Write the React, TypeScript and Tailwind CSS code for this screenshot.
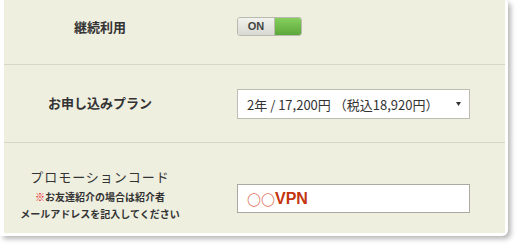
import React from 'react';

const jp = "font-['Meiryo','Noto_Sans_CJK_JP',sans-serif]";

const App: React.FC = () => {
  return (
    <div className={`w-[516px] h-[246px] bg-white ${jp} text-[#333]`}>
      <div className="w-[508px] h-[236px] bg-white rounded-br-[6px] rounded-tr-[4px] shadow-[3px_3px_5px_rgba(0,0,0,0.28)] pl-1 pr-[3px] pb-[3px]">
        <div className="h-full bg-[#efefe0] flex flex-col">
          {/* 継続利用 */}
          <div className="h-[65px] border-b border-[#d7d7c7] flex items-start pt-[17px]">
            <div className="w-[192px] h-[19px] flex items-center justify-center text-[13px] font-bold leading-none">
              継続利用
            </div>
            <div className="ml-[41px] flex h-[19px] w-[65px] rounded-[3px] border border-[#b9b9b0] overflow-hidden">
              <div className="w-[36px] flex items-center justify-center bg-gradient-to-b from-[#f2f2ee] to-[#d9d9d3] text-[11px] font-bold text-[#444] font-['Liberation_Sans',sans-serif] leading-none">
                ON
              </div>
              <div className="flex-1 border-l border-[#b9b9b0] bg-gradient-to-b from-[#86cf5e] to-[#5ca83a]" />
            </div>
          </div>

          {/* お申し込みプラン */}
          <div className="h-[78px] border-b border-[#d7d7c7] flex items-start pt-[24px]">
            <div className="w-[192px] pt-[4px] flex justify-center text-[13px] font-bold leading-[20px]">
              お申し込みプラン
            </div>
            <div className="ml-[41px] w-[233px] h-[30px] bg-white border border-[#bdbdb5] flex items-center pl-[9px] pr-[7px] text-[13px] leading-none">
              <span className="flex-1 whitespace-nowrap">2年 / 17,200円 （税込18,920円）</span>
              <svg width="5" height="4" viewBox="0 0 5 4" className="mr-[1px]">
                <path d="M0 0H5L2.5 4Z" fill="#333" />
              </svg>
            </div>
          </div>

          {/* プロモーションコード */}
          <div className="flex-1 flex items-start pt-[25px]">
            <div className="w-[192px] flex flex-col items-center">
              <div className="text-[13px] tracking-[1px] leading-[18px]">プロモーションコード</div>
              <div className="mt-[3px] text-[10px] font-bold leading-[16px]">
                <span className="text-[#e8000b]">※</span>お友達紹介の場合は紹介者
              </div>
              <div className="mt-[1px] text-[10px] font-bold leading-[16px]">メールアドレスを記入してください</div>
            </div>
            <div className="ml-[41px] mt-[16px] w-[233px] h-[29px] bg-white border border-[#aaaaa2] flex items-center pl-[9px]">
              <span className="text-[14px] font-light text-[#dd6a50] leading-none">〇〇</span>
              <span className="text-[16px] font-bold text-[#c4350f] font-['Liberation_Sans',sans-serif] leading-none">VPN</span>
            </div>
          </div>
        </div>
      </div>
    </div>
  );
};

export default App;
